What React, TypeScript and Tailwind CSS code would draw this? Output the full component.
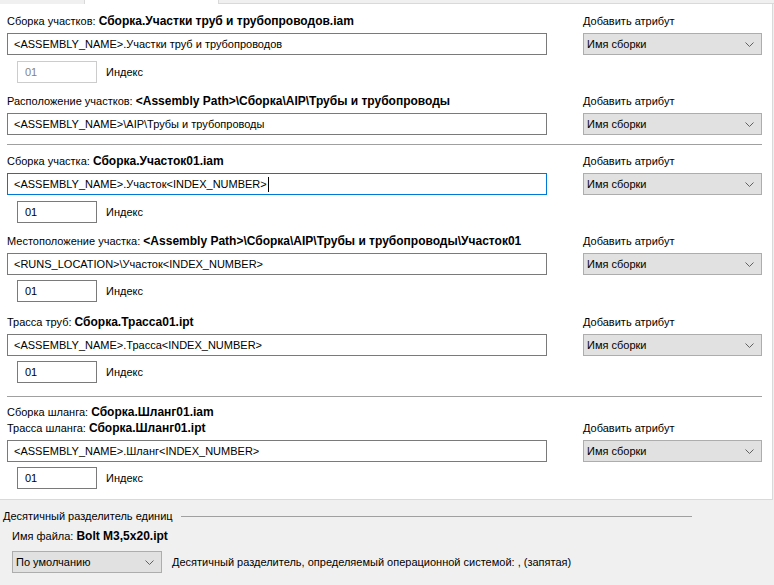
type Section = {
  labels: { name: string; value: string }[];
  input: string;
  focused?: boolean;
  index?: { value: string; disabled?: boolean; mt: string };
};

function Chevron() {
  return (
    <svg width="9" height="5" viewBox="0 0 9 5" className="shrink-0">
      <path d="M0.5 0.5 L4.5 4.5 L8.5 0.5" fill="none" stroke="#606060" strokeWidth="1" />
    </svg>
  );
}

function Select({ value, className = '' }: { value: string; className?: string }) {
  return (
    <div className={`h-[22px] border border-[#adadad] bg-[#e1e1e1] flex items-center justify-between pl-[3px] pr-[7px] ${className}`}>
      <span>{value}</span>
      <Chevron />
    </div>
  );
}

function IndexRow({ value, disabled, mt }: { value: string; disabled?: boolean; mt: string }) {
  return (
    <div className={`flex items-center ml-[10px] ${mt}`}>
      <div
        className={`w-[80px] h-[22px] border flex items-center pl-[7px] bg-white ${
          disabled ? 'border-[#cccccc] text-[#838383]' : 'border-[#7a7a7a]'
        }`}
      >
        {value}
      </div>
      <span className="ml-[9px]">Индекс</span>
    </div>
  );
}

function Block({ s }: { s: Section }) {
  return (
    <div>
      <div className="flex">
        <div className="w-[540px]">
          {s.labels.map((l) => (
            <div key={l.name} className="h-4 leading-4 whitespace-nowrap">
              {l.name} <b className="font-bold text-[12px]">{l.value}</b>
            </div>
          ))}
          <div
            className={`mt-1 h-[22px] border bg-white flex items-center pl-[6px] whitespace-nowrap ${
              s.focused ? 'border-[#0078d7]' : 'border-[#7a7a7a]'
            }`}
          >
            {s.input}
            {s.focused && <span className="w-px h-[15px] bg-black ml-px" />}
          </div>
        </div>
        <div className="w-[179px] ml-[36px] flex flex-col justify-end">
          <div className="h-4 leading-4">Добавить атрибут</div>
          <Select value="Имя сборки" className="mt-1" />
        </div>
      </div>
      {s.index && <IndexRow {...s.index} />}
    </div>
  );
}

export default function App() {
  return (
    <div
      className="w-[774px] h-[585px] bg-[#f0f0f0] text-[11px] text-black overflow-hidden"
      style={{ fontFamily: '"Liberation Sans", Arial, sans-serif' }}
    >
      {/* вкладки */}
      <div className="flex h-[4px]">
        <div className="w-[85px] bg-[#f0f0f0] border-r border-[#d9d9d9]" />
        <div className="w-[133px] bg-white" />
        <div className="flex-1 bg-[#f0f0f0] border-l border-b border-[#d9d9d9]" />
      </div>

      {/* панель */}
      <div className="w-[773px] bg-white border-r border-b border-[#d9d9d9] px-[7px] pt-[9px] pb-[10px]">
        <Block
          s={{
            labels: [{ name: 'Сборка участков:', value: 'Сборка.Участки труб и трубопроводов.iam' }],
            input: '<ASSEMBLY_NAME>.Участки труб и трубопроводов',
            index: { value: '01', disabled: true, mt: 'mt-[6px]' },
          }}
        />
        <div className="mt-[10px]">
          <Block
            s={{
              labels: [{ name: 'Расположение участков:', value: '<Assembly Path>\\Сборка\\AIP\\Трубы и трубопроводы' }],
              input: '<ASSEMBLY_NAME>\\AIP\\Трубы и трубопроводы',
            }}
          />
        </div>
        <div className="mt-[9px] h-px w-[755px] bg-[#a0a0a0]" />

        <div className="mt-[8px]">
          <Block
            s={{
              labels: [{ name: 'Сборка участка:', value: 'Сборка.Участок01.iam' }],
              input: '<ASSEMBLY_NAME>.Участок<INDEX_NUMBER>',
              focused: true,
              index: { value: '01', mt: 'mt-[6px]' },
            }}
          />
        </div>
        <div className="mt-[10px]">
          <Block
            s={{
              labels: [{ name: 'Местоположение участка:', value: '<Assembly Path>\\Сборка\\AIP\\Трубы и трубопроводы\\Участок01' }],
              input: '<RUNS_LOCATION>\\Участок<INDEX_NUMBER>',
              index: { value: '01', mt: 'mt-[5px]' },
            }}
          />
        </div>
        <div className="mt-[12px]">
          <Block
            s={{
              labels: [{ name: 'Трасса труб:', value: 'Сборка.Трасса01.ipt' }],
              input: '<ASSEMBLY_NAME>.Трасса<INDEX_NUMBER>',
              index: { value: '01', mt: 'mt-[5px]' },
            }}
          />
        </div>
        <div className="mt-[13px] h-px w-[755px] bg-[#a0a0a0]" />

        <div className="mt-[7px]">
          <Block
            s={{
              labels: [
                { name: 'Сборка шланга:', value: 'Сборка.Шланг01.iam' },
                { name: 'Трасса шланга:', value: 'Сборка.Шланг01.ipt' },
              ],
              input: '<ASSEMBLY_NAME>.Шланг<INDEX_NUMBER>',
              index: { value: '01', mt: 'mt-[5px]' },
            }}
          />
        </div>
      </div>

      {/* десятичный разделитель */}
      <div className="pl-[3px] pt-[8px]">
        <div className="flex items-center h-4 w-[689px]">
          <span className="whitespace-nowrap">Десятичный разделитель единиц</span>
          <div className="ml-[8px] flex-1 h-px bg-[#a0a0a0]" />
        </div>
        <div className="ml-[9px] mt-1 h-4 leading-4">
          Имя файла: <b className="font-bold text-[12px]">Bolt M3,5x20.ipt</b>
        </div>
        <div className="ml-[9px] mt-[7px] flex items-center">
          <Select value="По умолчанию" className="w-[150px]" />
          <span className="ml-[10px] whitespace-nowrap">
            Десятичный разделитель, определяемый операционной системой: , (запятая)
          </span>
        </div>
      </div>
    </div>
  );
}
